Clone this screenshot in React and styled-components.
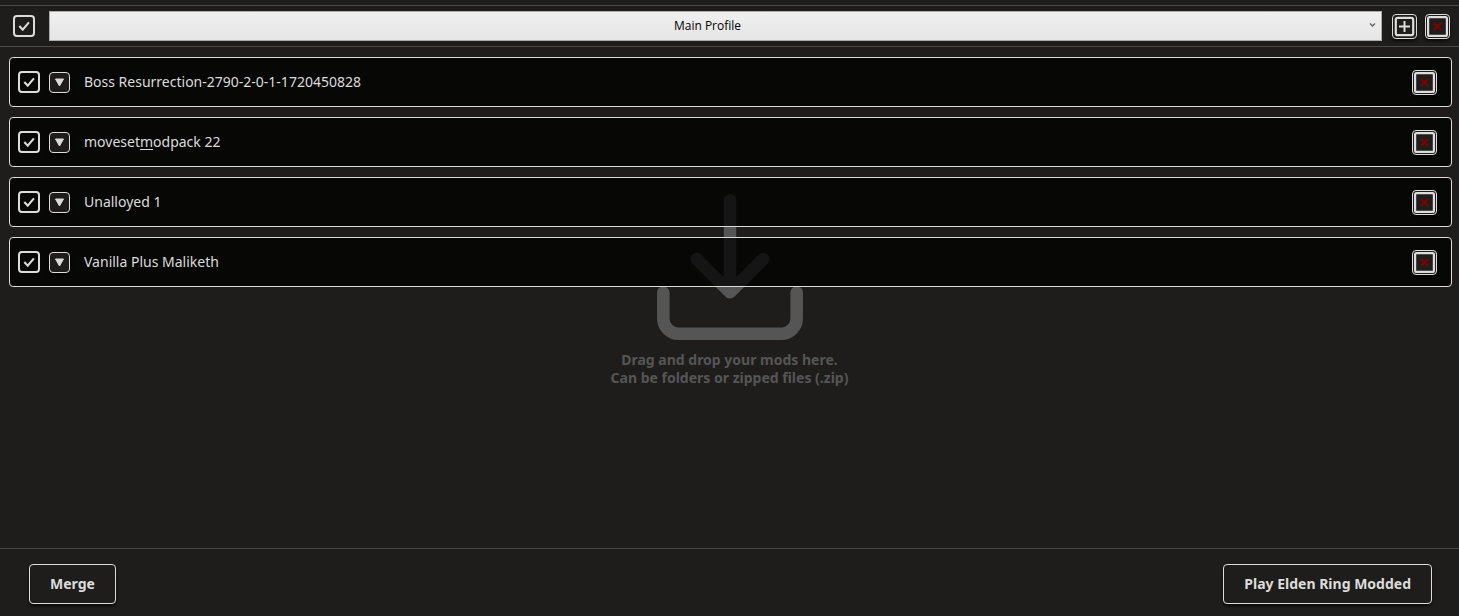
import React from "react";
import styled, { createGlobalStyle, css } from "styled-components";

const GlobalStyle = createGlobalStyle`
  *, *::before, *::after { box-sizing: border-box; }
  body {
    margin: 0;
    background: #1e1d1b;
    color: #dcdcdc;
    font-family: "Noto Sans", "Open Sans", sans-serif;
  }
  button { font-family: inherit; }
`;

const Window = styled.div`
  display: flex;
  flex-direction: column;
  min-height: 100vh;
  padding-top: 5px;
`;

const Toolbar = styled.header`
  display: flex;
  align-items: center;
  padding: 5px 9px 5px 13px;
  border: solid #484848;
  border-width: 1px 0;
`;

const SelectWrap = styled.div`
  display: grid;
  flex: 1;
  align-items: center;
  margin: 0 10px 0 14px;
  & > * { grid-area: 1 / 1; }
`;

const ProfileSelect = styled.select`
  appearance: none;
  width: 100%;
  height: 30px;
  padding: 0 16px 2px 0;
  border: 1px solid #acacac;
  border-radius: 0;
  background: linear-gradient(#f0f0f0, #e5e5e5);
  color: #000;
  font-family: "Open Sans", "Noto Sans", sans-serif;
  font-size: 12px;
  text-align: center;
  text-align-last: center;
`;

const SelectArrow = styled.svg`
  justify-self: end;
  margin: 0 6px 2px 0;
  pointer-events: none;
`;

const ToolButtons = styled.div`
  display: flex;
  gap: 8px;
`;

const CheckWrap = styled.label`
  display: grid;
  place-items: center;
  width: 22px;
  height: 22px;
  & > * { grid-area: 1 / 1; }
`;

const CheckInput = styled.input`
  appearance: none;
  width: 22px;
  height: 22px;
  margin: 0;
  border: 2px solid #dcdcdc;
  border-radius: 4px;
  & + svg { visibility: hidden; pointer-events: none; }
  &:checked + svg { visibility: visible; }
`;

const raised = css`
  border: 1px solid #dcdcdc;
  border-radius: 4px;
  background: #1e1d1b;
  color: #dcdcdc;
  box-shadow: 0 2px 3px rgba(0, 0, 0, 0.7);
`;

const IconButton = styled.button`
  ${raised}
  display: grid;
  place-items: center;
  width: ${(p) => p.$size}px;
  height: ${(p) => p.$size}px;
  padding: 0;
`;

const Stage = styled.main`
  position: relative;
  flex: 1;
  padding: 10px 7px 10px 9px;
`;

const DropHint = styled.div`
  position: absolute;
  inset: 0;
  display: flex;
  flex-direction: column;
  align-items: center;
  justify-content: center;
  gap: 11px;
  padding-bottom: 14px;
  color: #555;
  font-size: 14px;
  font-weight: 700;
  line-height: 18px;
  text-align: center;
`;

const HintText = styled.p`
  margin: 0;
`;

const ModList = styled.ul`
  position: relative;
  display: flex;
  flex-direction: column;
  gap: 10px;
  margin: 0;
  padding: 0;
  list-style: none;
`;

const ModRow = styled.li`
  display: flex;
  align-items: center;
  height: 50px;
  padding: 0 14px 0 8px;
  border: 1px solid #dcdcdc;
  border-radius: 4px;
  background: rgba(0, 0, 0, 0.75);
`;

const ModName = styled.span`
  flex: 1;
  margin-left: 14px;
  font-size: 14px;
  line-height: 20px;
  u { text-underline-offset: 2px; }
`;

const MenuSlot = styled.div`
  display: flex;
  margin-left: 9px;
`;

const Footer = styled.footer`
  display: flex;
  justify-content: space-between;
  padding: 15px 27px 12px 29px;
  border-top: 1px solid #484848;
`;

const ActionButton = styled.button`
  ${raised}
  height: 40px;
  padding: 0 20px 2px;
  font-size: 14px;
  font-weight: 700;
`;

function Check({ label }) {
  return (
    <CheckWrap>
      <CheckInput type="checkbox" defaultChecked aria-label={label} />
      <svg width="22" height="22" viewBox="0 0 22 22" fill="none">
        <path d="M6.3 11 9.7 14.6 15.9 7.4" stroke="#dcdcdc" strokeWidth="2.1" />
      </svg>
    </CheckWrap>
  );
}

function DeleteButton({ label }) {
  return (
    <IconButton type="button" $size={25} aria-label={label}>
      <svg width="21" height="21" viewBox="0 0 21 21" fill="none">
        <rect x="1.1" y="1.1" width="18.8" height="18.8" rx="1.5" stroke="#dcdcdc" strokeWidth="2.2" />
        <path d="M6.8 6.8l7.4 7.4M14.2 6.8l-7.4 7.4" stroke="#850000" strokeWidth="1.9" />
      </svg>
    </IconButton>
  );
}

function AddButton() {
  return (
    <IconButton type="button" $size={25} aria-label="Add profile">
      <svg width="21" height="21" viewBox="0 0 21 21" fill="none">
        <rect x="1.8" y="1.8" width="17.4" height="17.4" rx="2" stroke="#dcdcdc" strokeWidth="2.2" />
        <path d="M10.5 5v11M5 10.5h11" stroke="#dcdcdc" strokeWidth="2" />
      </svg>
    </IconButton>
  );
}

const mods = [
  { id: 1, name: "Boss Resurrection-2790-2-0-1-1720450828" },
  { id: 2, name: <>moveset<u>m</u>odpack 22</> },
  { id: 3, name: "Unalloyed 1" },
  { id: 4, name: "Vanilla Plus Maliketh" },
];

export default function App() {
  return (
    <Window>
      <GlobalStyle />
      <Toolbar>
        <Check label="Enable all mods" />
        <SelectWrap>
          <ProfileSelect aria-label="Profile">
            <option>Main Profile</option>
          </ProfileSelect>
          <SelectArrow width="7" height="6" viewBox="0 0 7 6" fill="none">
            <path d="M1 1.5 3.5 4 6 1.5" stroke="#606060" strokeWidth="1.4" />
          </SelectArrow>
        </SelectWrap>
        <ToolButtons>
          <AddButton />
          <DeleteButton label="Delete profile" />
        </ToolButtons>
      </Toolbar>
      <Stage>
        <DropHint>
          <svg width="146" height="146" viewBox="0 0 146 146" fill="none" stroke="currentColor" strokeWidth="12.5" strokeLinecap="round" strokeLinejoin="round">
            <path d="M73 6.5V98M39.8 65 73 98.3 106.2 65" />
            <path d="M6.3 98.5V124.5a15.2 15.2 0 0 0 15.2 15.2h103a15.2 15.2 0 0 0 15.2-15.2V98.5" />
          </svg>
          <HintText>
            Drag and drop your mods here.
            <br />
            Can be folders or zipped files (.zip)
          </HintText>
        </DropHint>
        <ModList>
          {mods.map((mod) => (
            <ModRow key={mod.id}>
              <Check label="Enable mod" />
              <MenuSlot>
                <IconButton type="button" $size={21} aria-label="Mod options">
                  <svg width="11" height="9" viewBox="0 0 11 9">
                    <path d="M1.5 1h8L5.5 8z" fill="#dcdcdc" stroke="#dcdcdc" strokeLinejoin="round" />
                  </svg>
                </IconButton>
              </MenuSlot>
              <ModName>{mod.name}</ModName>
              <DeleteButton label="Remove mod" />
            </ModRow>
          ))}
        </ModList>
      </Stage>
      <Footer>
        <ActionButton type="button">Merge</ActionButton>
        <ActionButton type="button">Play Elden Ring Modded</ActionButton>
      </Footer>
    </Window>
  );
}
